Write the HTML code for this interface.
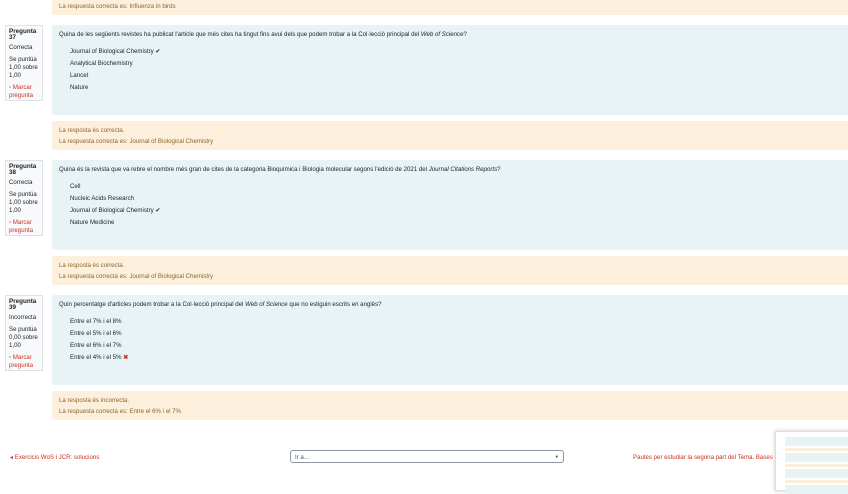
<!DOCTYPE html>
<html><head><meta charset="utf-8"><style>
*{margin:0;padding:0;box-sizing:border-box}
body{width:848px;height:489px;overflow:hidden;background:#fff;font-family:"Liberation Sans",sans-serif;font-size:6.1px;color:#1d2125;position:relative}
.a{position:absolute}
.info{position:absolute;left:5px;width:38px;height:76px;background:#f8f9fa;border:1px solid #dee2e6;padding:3px 3px;line-height:8px}
.info b{display:block;font-size:6.3px;line-height:6px}
.info .r{color:#ca3120}
.q{position:absolute;left:52px;width:800px;height:90px;background:#e7f3f5;border-radius:3px;padding:6px 7px}
.fb{position:absolute;left:52px;width:800px;height:29px;background:#fcefdc;border-radius:3px;padding:4px 7px;color:#8e662e;line-height:11px}
.opt{position:absolute;left:18px}
.opt:before{content:"";position:absolute;left:-9px;top:1px;width:4px;height:4px;border-radius:50%;background:#eef5f7}
.x{color:#ca3120;font-weight:bold}
</style></head><body>
<div class="fb" style="top:-14px;height:29px;"><div style="position:absolute;top:15px;left:7px">La respuesta correcta es: Influenza in birds</div></div>

<div class="info" style="top:25px"><b>Pregunta<br>37</b><div style="margin-top:3px">Correcta</div><div style="margin-top:4px">Se puntúa 1,00 sobre 1,00</div><div class="r" style="margin-top:4px">▫ Marcar pregunta</div></div>
<div class="q" style="top:25px;height:90px"><div>Quina de les següents revistes ha publicat l'article que més cites ha tingut fins avui dels que podem trobar a la Col·lecció principal del <i>Web of Science</i>?</div>
<div class="opt" style="top:23px">Journal of Biological Chemistry ✔</div>
<div class="opt" style="top:35px">Analytical Biochemistry</div>
<div class="opt" style="top:47px">Lancet</div>
<div class="opt" style="top:59px">Nature</div></div>
<div class="fb" style="top:121px"><div>La resposta és correcta.</div><div>La respuesta correcta es: Journal of Biological Chemistry</div></div>

<div class="info" style="top:160px"><b>Pregunta<br>38</b><div style="margin-top:3px">Correcta</div><div style="margin-top:4px">Se puntúa 1,00 sobre 1,00</div><div class="r" style="margin-top:4px">▫ Marcar pregunta</div></div>
<div class="q" style="top:160px"><div>Quina és la revista que va rebre el nombre més gran de cites de la categoria Bioquímica i Biologia molecular segons l'edició de 2021 del <i>Journal Citations Reports</i>?</div>
<div class="opt" style="top:23px">Cell</div>
<div class="opt" style="top:35px">Nucleic Acids Research</div>
<div class="opt" style="top:47px">Journal of Biological Chemistry ✔</div>
<div class="opt" style="top:59px">Nature Medicine</div></div>
<div class="fb" style="top:256px"><div>La resposta és correcta.</div><div>La respuesta correcta es: Journal of Biological Chemistry</div></div>

<div class="info" style="top:295px"><b>Pregunta<br>39</b><div style="margin-top:3px">Incorrecta</div><div style="margin-top:4px">Se puntúa 0,00 sobre 1,00</div><div class="r" style="margin-top:4px">▫ Marcar pregunta</div></div>
<div class="q" style="top:295px"><div>Quin percentatge d'articles podem trobar a la Col·lecció principal del <i>Web of Science</i> que no estiguin escrits en anglès?</div>
<div class="opt" style="top:23px">Entre el 7% i el 8%</div>
<div class="opt" style="top:35px">Entre el 5% i el 6%</div>
<div class="opt" style="top:47px">Entre el 6% i el 7%</div>
<div class="opt" style="top:59px">Entre el 4% i el 5% <span class="x">✖</span></div></div>
<div class="fb" style="top:391px"><div>La resposta és incorrecta.</div><div>La respuesta correcta es: Entre el 6% i el 7%</div></div>

<div class="a" style="left:10px;top:454px;color:#ca3120">◂ Exercicis WoS i JCR: solucions</div>
<div class="a" style="left:290px;top:450px;width:274px;height:13px;border:1px solid #8f959e;border-radius:3px;padding:3px 4px;color:#555">Ir a...<span style="position:absolute;right:5px;top:3px;font-size:5px">♦</span></div>
<div class="a" style="left:633px;top:454px;color:#ca3120;white-space:nowrap">Pautes per estudiar la segona part del Tema. Bases de</div>
<div class="a" style="left:775px;top:431px;width:80px;height:60px;background:#fff;border:1px solid #ddd;box-shadow:0 0 4px #ccc;padding:3px">
<div style="height:9px;background:#e7f3f5;margin:2px 0 2px 6px"></div>
<div style="height:3px;background:#fcefdc;margin:0 0 2px 6px"></div>
<div style="height:9px;background:#e7f3f5;margin:0 0 2px 6px"></div>
<div style="height:3px;background:#fcefdc;margin:0 0 2px 6px"></div>
<div style="height:9px;background:#e7f3f5;margin:0 0 2px 6px"></div>
<div style="height:3px;background:#fcefdc;margin:0 0 2px 6px"></div>
<div style="height:9px;background:#e7f3f5;margin:0 0 0 6px"></div>
</div>
</body></html>
